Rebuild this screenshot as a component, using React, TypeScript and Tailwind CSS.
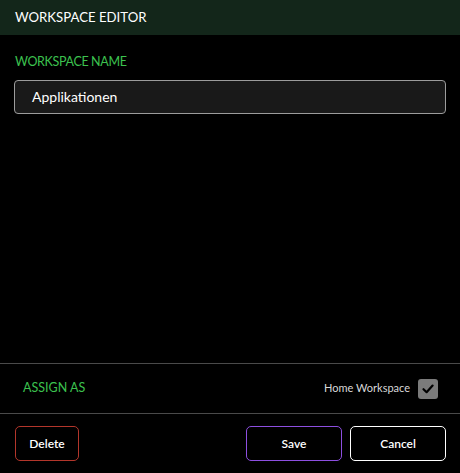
import React from 'react'

const App = () => {
  return (
    <div className="flex h-[473px] w-[460px] flex-col bg-black text-[13px] text-white" style={{ fontFamily: "Lato, 'Liberation Sans', sans-serif" }}>
      <div className="flex h-[35px] items-center bg-[#13261a] px-[15px]">
        <span className="text-[13.2px]">WORKSPACE EDITOR</span>
      </div>

      <div className="flex-1 px-[14px] pt-[18px]">
        <div className="pl-px text-[12.5px] tracking-[-0.35px] text-[#3cc24f]">WORKSPACE NAME</div>
        <div className="mt-[8px] flex h-[34px] items-center rounded-[4px] border border-[#9c9c9c] bg-[#191919] px-[17px]">
          <span className="text-[14px]">Applikationen</span>
        </div>
      </div>

      <div className="flex h-[50px] items-center justify-between border-t border-[#4a4a4a] pl-[23px] pr-[22px]">
        <span className="text-[12.5px] text-[#3cc24f]">ASSIGN AS</span>
        <div className="flex items-center gap-[8px]">
          <span className="text-[11px] text-[#d8d8d8]">Home Workspace</span>
          <div className="flex h-[20px] w-[20px] items-center justify-center rounded-[3px] bg-[#7b7b7b]">
            <svg width="14" height="14" viewBox="0 0 14 14" fill="none">
              <path d="M2.5 7.2 L5.6 10.2 L11.6 3.6" stroke="#000" strokeWidth="2.2" strokeLinecap="round" strokeLinejoin="round" />
            </svg>
          </div>
        </div>
      </div>

      <div className="flex h-[60px] items-start justify-between border-t border-[#4a4a4a] pl-[15px] pr-[14px] pt-[12px]">
        <button className="h-[35px] w-[64px] rounded-[5px] border border-[#b3362b] text-[12px] font-semibold">Delete</button>
        <div className="flex gap-[8px]">
          <button className="h-[35px] w-[96px] rounded-[5px] border border-[#8d4fe0] text-[12px] font-semibold">Save</button>
          <button className="h-[35px] w-[96px] rounded-[5px] border border-white text-[12px] font-semibold">Cancel</button>
        </div>
      </div>
    </div>
  )
}

export default App
